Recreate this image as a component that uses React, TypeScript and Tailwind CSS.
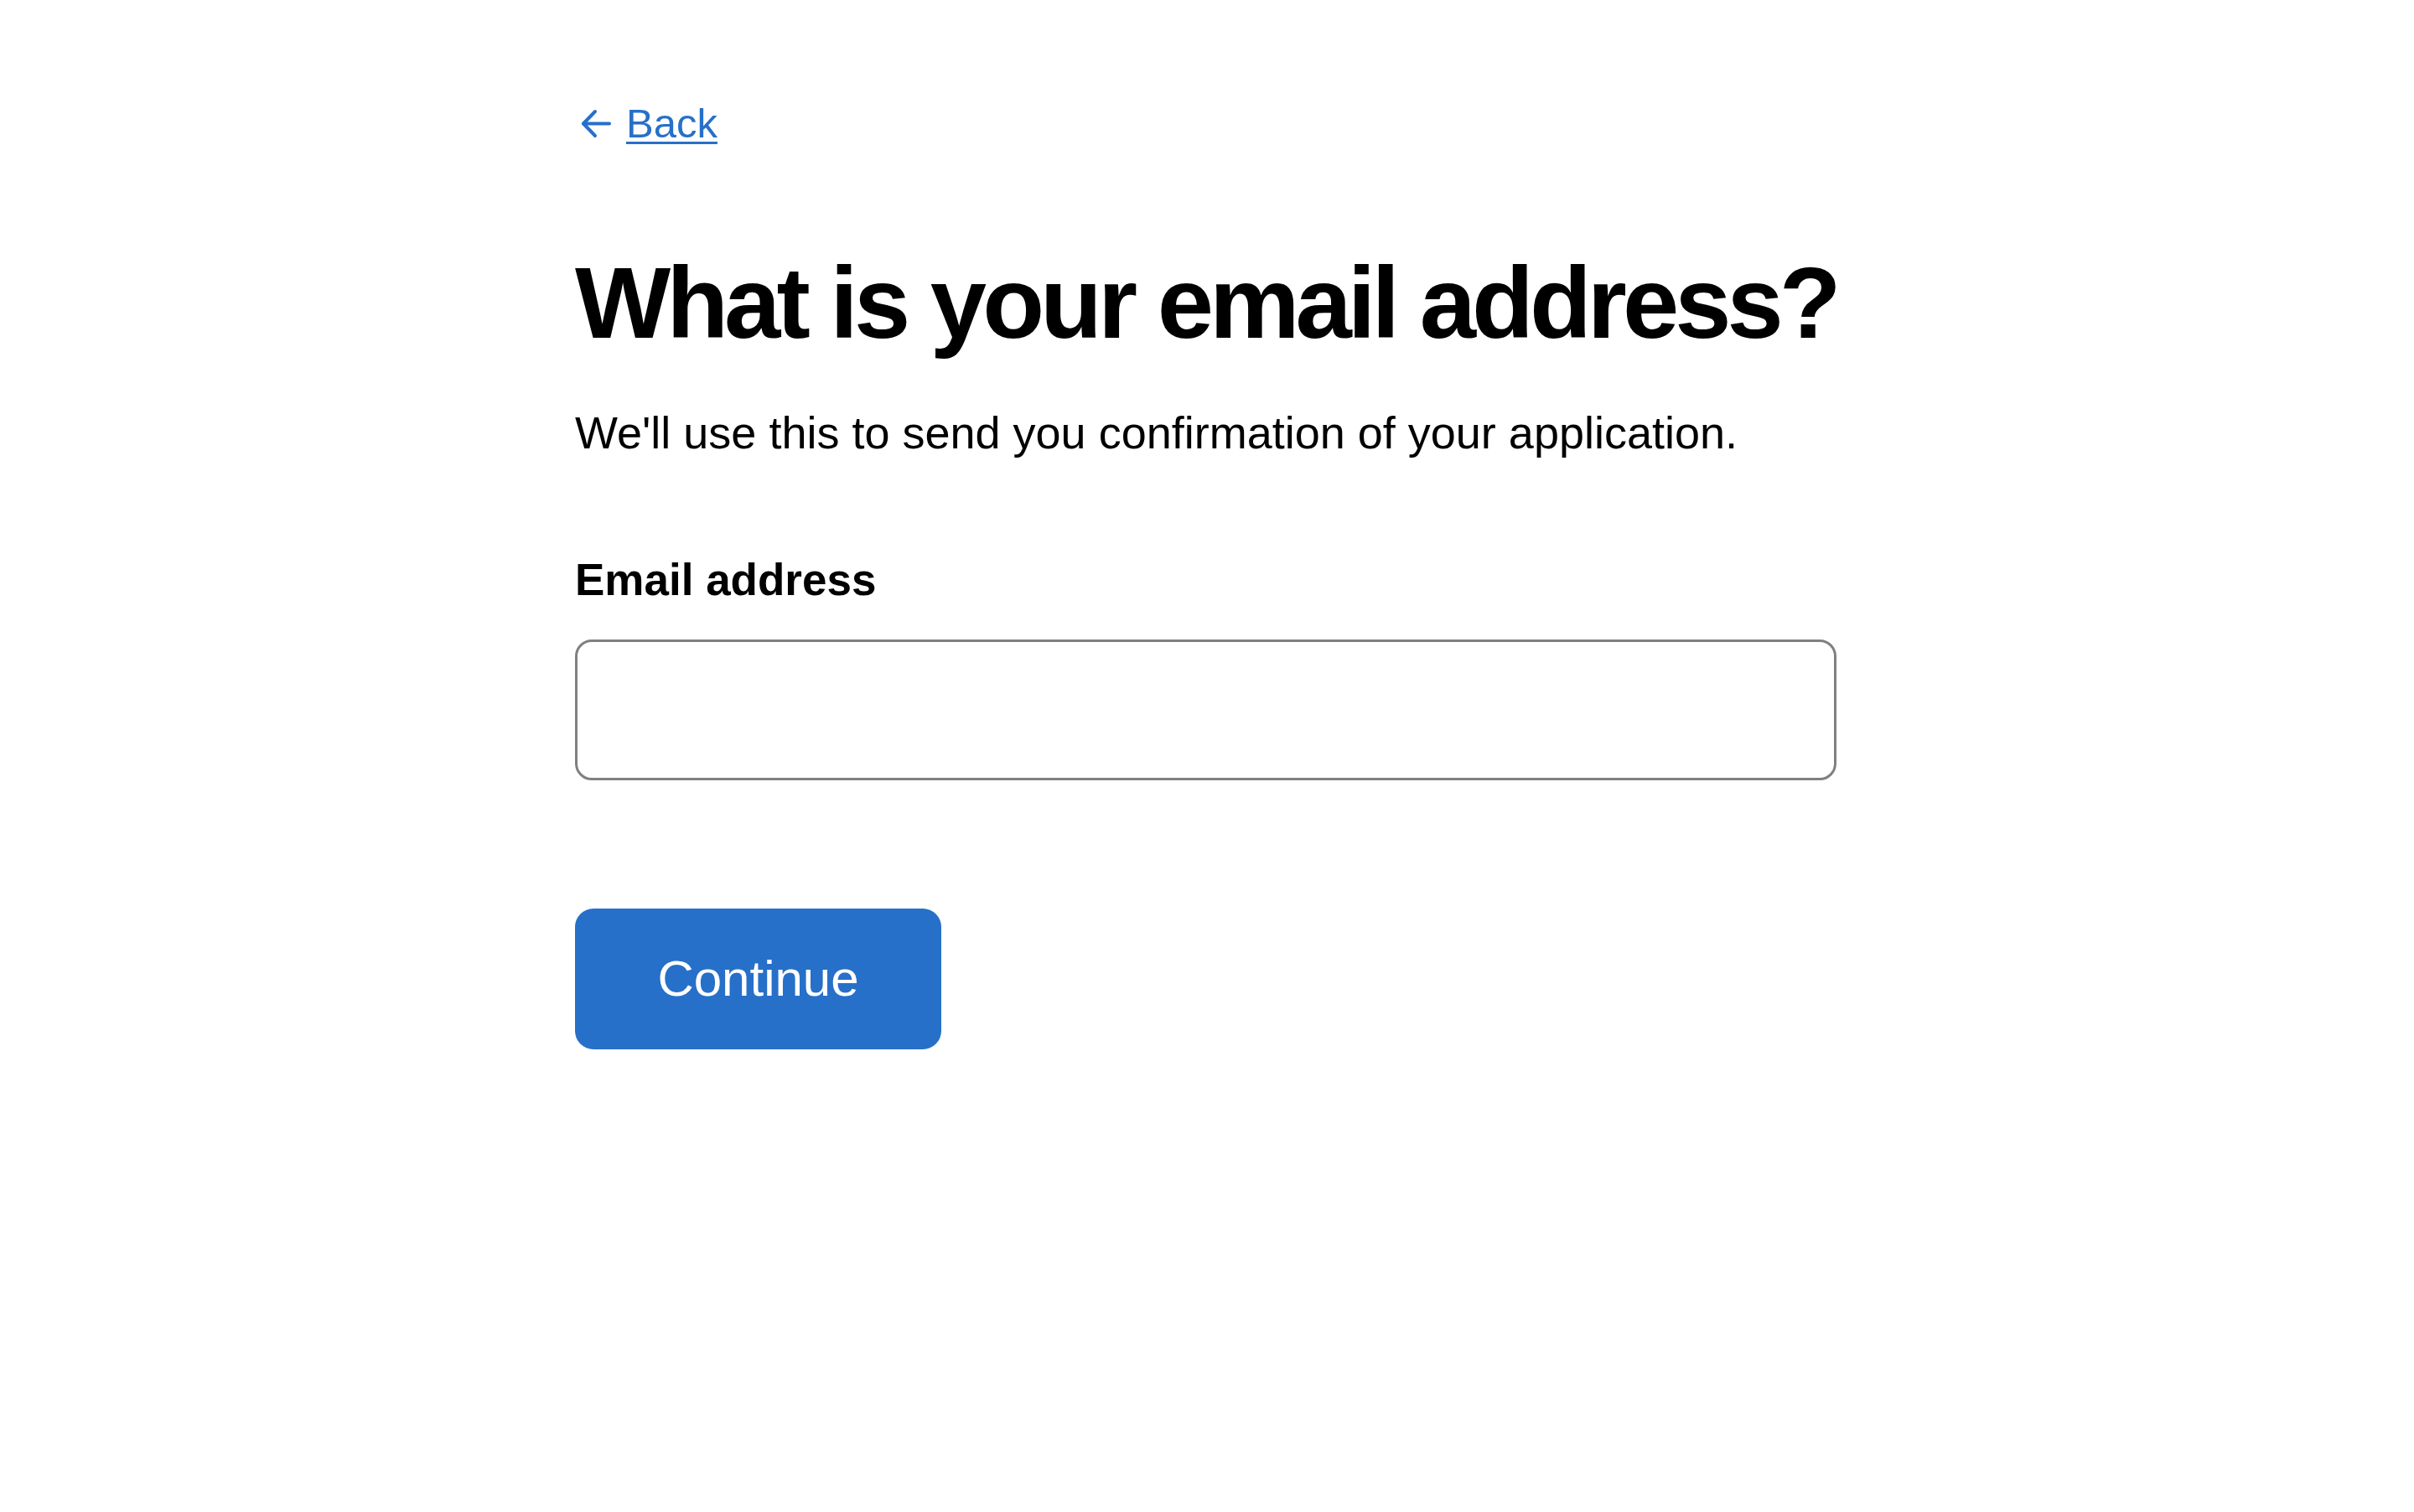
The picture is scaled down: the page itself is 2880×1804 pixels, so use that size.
import React from "react";

export default function App() {
  return (
    <div className="min-h-screen w-full bg-white" style={{ fontFamily: '"Liberation Sans", Arial, sans-serif' }}>
      <div className="mx-auto w-[1508px] pt-[123px] pb-[200px]">
        <a href="#" className="flex items-center gap-[15px] text-[#2770c9] h-[48px]">
          <svg width="40" height="36" viewBox="0 0 40 36" fill="none" stroke="#2770c9" strokeWidth="4" strokeLinecap="round" strokeLinejoin="round" className="shrink-0 ml-[6px]">
            <path d="M18 4 L4 18.5 L18 33" />
            <path d="M4 18.5 H35" />
          </svg>
          <span className="text-[49px] leading-none underline decoration-[3px] underline-offset-[5px]">Back</span>
        </a>

        <h1 className="mt-[130px] text-[121px] leading-none font-bold tracking-[-5px] text-black whitespace-nowrap">
          What is your email address?
        </h1>

        <p className="mt-[67px] text-[54px] leading-none text-black">
          We'll use this to send you confirmation of your application.
        </p>

        <label htmlFor="email" className="block mt-[122px] text-[53px] leading-none font-bold text-black">
          Email address
        </label>

        <input
          id="email"
          type="email"
          className="block mt-[45px] w-[1505px] h-[168px] rounded-[20px] border-[3px] border-[#808080] bg-white px-6 text-[54px] outline-none"
        />

        <button className="mt-[153px] w-[437px] h-[168px] rounded-[22px] bg-[#2770c9] text-white text-[60px] leading-none">
          Continue
        </button>
      </div>
    </div>
  );
}
